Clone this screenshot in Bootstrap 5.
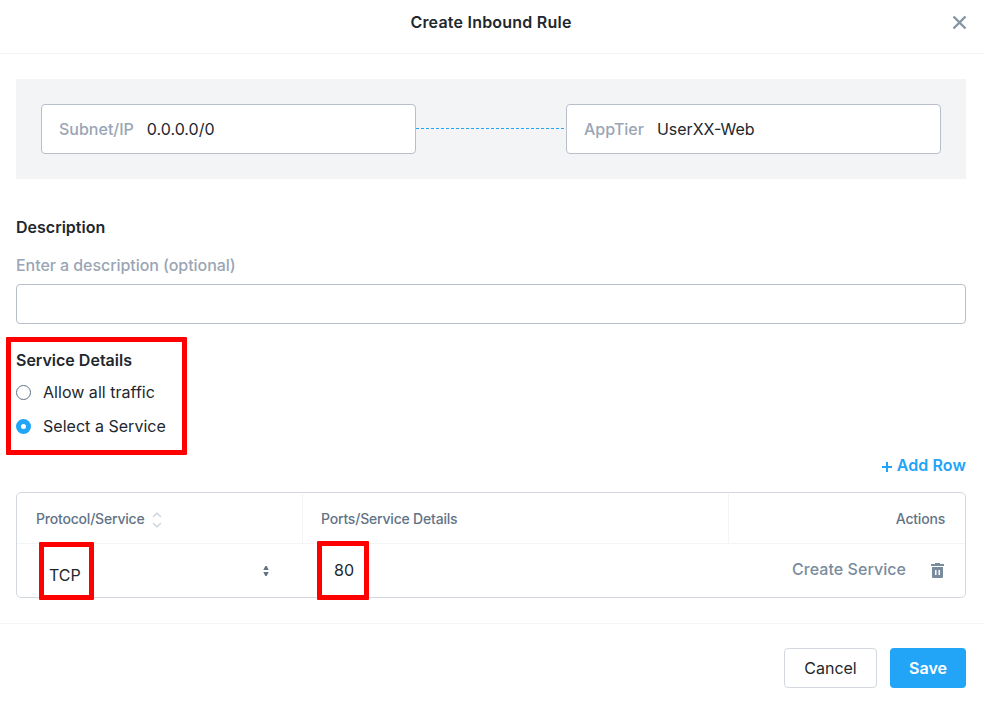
<!DOCTYPE html>
<html lang="en">
<head>
<meta charset="utf-8">
<meta name="viewport" content="width=device-width, initial-scale=1">
<title>Create Inbound Rule</title>
<link href="https://cdn.jsdelivr.net/npm/bootstrap@5.3.0/dist/css/bootstrap.min.css" rel="stylesheet">
<script src="https://cdn.jsdelivr.net/npm/bootstrap@5.3.0/dist/js/bootstrap.bundle.min.js" defer></script>
<style>
  body { font: 400 16px/24px Inter, "Liberation Sans", sans-serif; color: #22272e; background: #fff; }
  .dialog-head { height: 54px; padding: 0 2px 9px 0; border-bottom: 1px solid #f2f4f6; }
  .dialog-title { font-size: 16px; font-weight: 600; letter-spacing: .22px; line-height: 24px; }
  .close-x { right: 17px; top: 15px; width: 15px; height: 15px; color: #8595a6; line-height: 0; }
  .dialog-main { padding: 25px 18px 0 16px; }
  .rule-flow { height: 100px; padding: 0 25px; background: #f2f4f6; }
  .endpoint { width: 375px; height: 50px; padding-left: 17px; gap: 13px; border: 1px solid #b8bfca; border-radius: 4px; background: #fff; }
  .muted { color: #9aa5b5; font-weight: 500; }
  .dash { height: 1px; margin-bottom: 1px; background: repeating-linear-gradient(90deg, #22a5f7 0 3px, transparent 3px 5px); }
  .section-title { font-size: 16px; font-weight: 600; line-height: 24px; }
  .desc-title { margin-top: 36px; }
  .desc-label { margin-top: 14px; line-height: 24px; letter-spacing: -.06px; }
  .desc-input { height: 40px; margin-top: 7px; border: 1px solid #b8bfca; border-radius: 4px; }
  .service-block { margin-top: 24px; }
  .callout { border: 5px solid #f00; border-radius: 1px; pointer-events: none; }
  .callout-service { left: -10px; top: -11px; width: 181px; height: 118px; }
  .callout-tcp { left: 22px; top: -2px; width: 55px; height: 58px; }
  .callout-port { left: 15px; top: -3px; width: 52px; height: 59px; }
  .choice { gap: 12px; height: 24px; letter-spacing: .03px; }
  .choice .form-check-input { width: 15px; height: 15px; margin: 0; border: 1px solid #627386; background-image: none; box-shadow: none; }
  .choice .form-check-input:checked { border: 5px solid #22a5f7; background: #fff; }
  .choice-first { margin-top: 8px; }
  .choice-second { margin-top: 10px; }
  .add-row { margin-top: 15px; gap: 5px; font-weight: 600; color: #22a5f7; letter-spacing: .1px; }
  .rules { height: 106px; margin-top: 15px; border: 1px solid #d3d8e0; border-radius: 5px; }
  .rules-grid { display: grid; grid-template-columns: 285px 426px 1fr; }
  .rules-head { height: 51px; padding-top: 1px; border-bottom: 1px solid #f2f4f6; font-size: 14px; font-weight: 500; color: #627386; letter-spacing: -.2px; }
  .rules-head > div { padding: 0 20px 0 19px; }
  .rules-head > div + div { padding-left: 18px; border-left: 1px solid #f2f4f6; }
  .rules-head svg { margin: 2px 0 0 7px; }
  .rules-row { height: 53px; }
  .tcp-text { padding: 9px 33px 0 32px; }
  .port-text { padding-left: 32px; padding-bottom: 1px; }
  .row-actions { padding-right: 21px; padding-bottom: 4px; gap: 25px; color: #7b8b9e; letter-spacing: .05px; }
  .dialog-foot { height: 84px; margin-top: 25px; padding: 5px 18px 0 0; gap: 13px; border-top: 1px solid #f2f4f6; }
  .dialog-foot .btn { height: 40px; padding: 0; border-radius: 4px; font-size: 16px; line-height: 38px; }
  .btn-cancel { width: 93px; border: 1px solid #d3d8e0; color: #22272e; }
  .btn-save { width: 76px; background: #22a5f7; color: #fff; font-weight: 600; }
</style>
</head>
<body>
<header class="dialog-head position-relative d-flex align-items-center justify-content-center">
  <h1 class="dialog-title m-0">Create Inbound Rule</h1>
  <button class="close-x position-absolute border-0 bg-transparent p-0" aria-label="Close">
    <svg width="15" height="15" viewBox="0 0 15 15" fill="none" stroke="currentColor" stroke-width="2.4"><path d="M1.500 1.500 13.500 13.500M13.500 1.500 1.500 13.500"/></svg>
  </button>
</header>
<main class="dialog-main">
  <section class="rule-flow d-flex align-items-center">
    <div class="endpoint d-flex align-items-center"><span class="muted">Subnet/IP</span><span>0.0.0.0/0</span></div>
    <div class="dash flex-grow-1"></div>
    <div class="endpoint d-flex align-items-center"><span class="muted">AppTier</span><span>UserXX-Web</span></div>
  </section>

  <h2 class="section-title desc-title mb-0">Description</h2>
  <label class="desc-label muted d-block" for="desc">Enter a description (optional)</label>
  <input id="desc" class="desc-input d-block w-100" type="text">

  <section class="service-block position-relative">
    <h2 class="section-title m-0">Service Details</h2>
    <label class="choice choice-first d-flex align-items-center"><input class="form-check-input" type="radio" name="svc">Allow all traffic</label>
    <label class="choice choice-second d-flex align-items-center"><input class="form-check-input" type="radio" name="svc" checked>Select a Service</label>
    <div class="callout callout-service position-absolute"></div>
  </section>

  <div class="add-row d-flex justify-content-end align-items-center">
    <svg class="mt-1" width="10" height="10" viewBox="0 0 10 10" stroke="currentColor" stroke-width="2"><path d="M5 0v10M0 5h10"/></svg>
    <span>Add Row</span>
  </div>

  <section class="rules">
    <div class="rules-grid rules-head">
      <div class="d-flex align-items-center">Protocol/Service
        <svg width="10" height="16" viewBox="0 0 10 16" fill="none" stroke="#d3d8e0" stroke-width="1.600"><path d="M1 5 5 1.200 9 5M1 11l4 3.800L9 11"/></svg>
      </div>
      <div class="d-flex align-items-center">Ports/Service Details</div>
      <div class="d-flex align-items-center justify-content-end">Actions</div>
    </div>
    <div class="rules-grid rules-row">
      <div class="tcp-text position-relative d-flex align-items-center justify-content-between">
        <span>TCP</span>
        <svg class="mb-2" width="6" height="10" viewBox="0 0 6 10" fill="#627386"><path d="M.3 4 2.300 0h1.400l2 4zM.3 6h5.400l-2 4H2.300z"/></svg>
        <div class="callout callout-tcp position-absolute"></div>
      </div>
      <div class="port-text position-relative d-flex align-items-center">80
        <div class="callout callout-port position-absolute"></div>
      </div>
      <div class="row-actions d-flex align-items-center justify-content-end fw-medium"><span>Create Service</span>
        <svg class="mt-1" width="13" height="15" viewBox="0 0 13 15" fill="currentColor" fill-rule="evenodd"><path d="M4 0h5v1h4v2H0V1h4zM1 4h11v10q0 1-1 1H2q-1 0-1-1zM4 7v5h1.500V7zM7.500 7v5H9V7z"/></svg>
      </div>
    </div>
  </section>
</main>
<footer class="dialog-foot d-flex justify-content-end align-items-center">
  <button class="btn btn-cancel">Cancel</button>
  <button class="btn btn-save">Save</button>
</footer>
</body>
</html>
